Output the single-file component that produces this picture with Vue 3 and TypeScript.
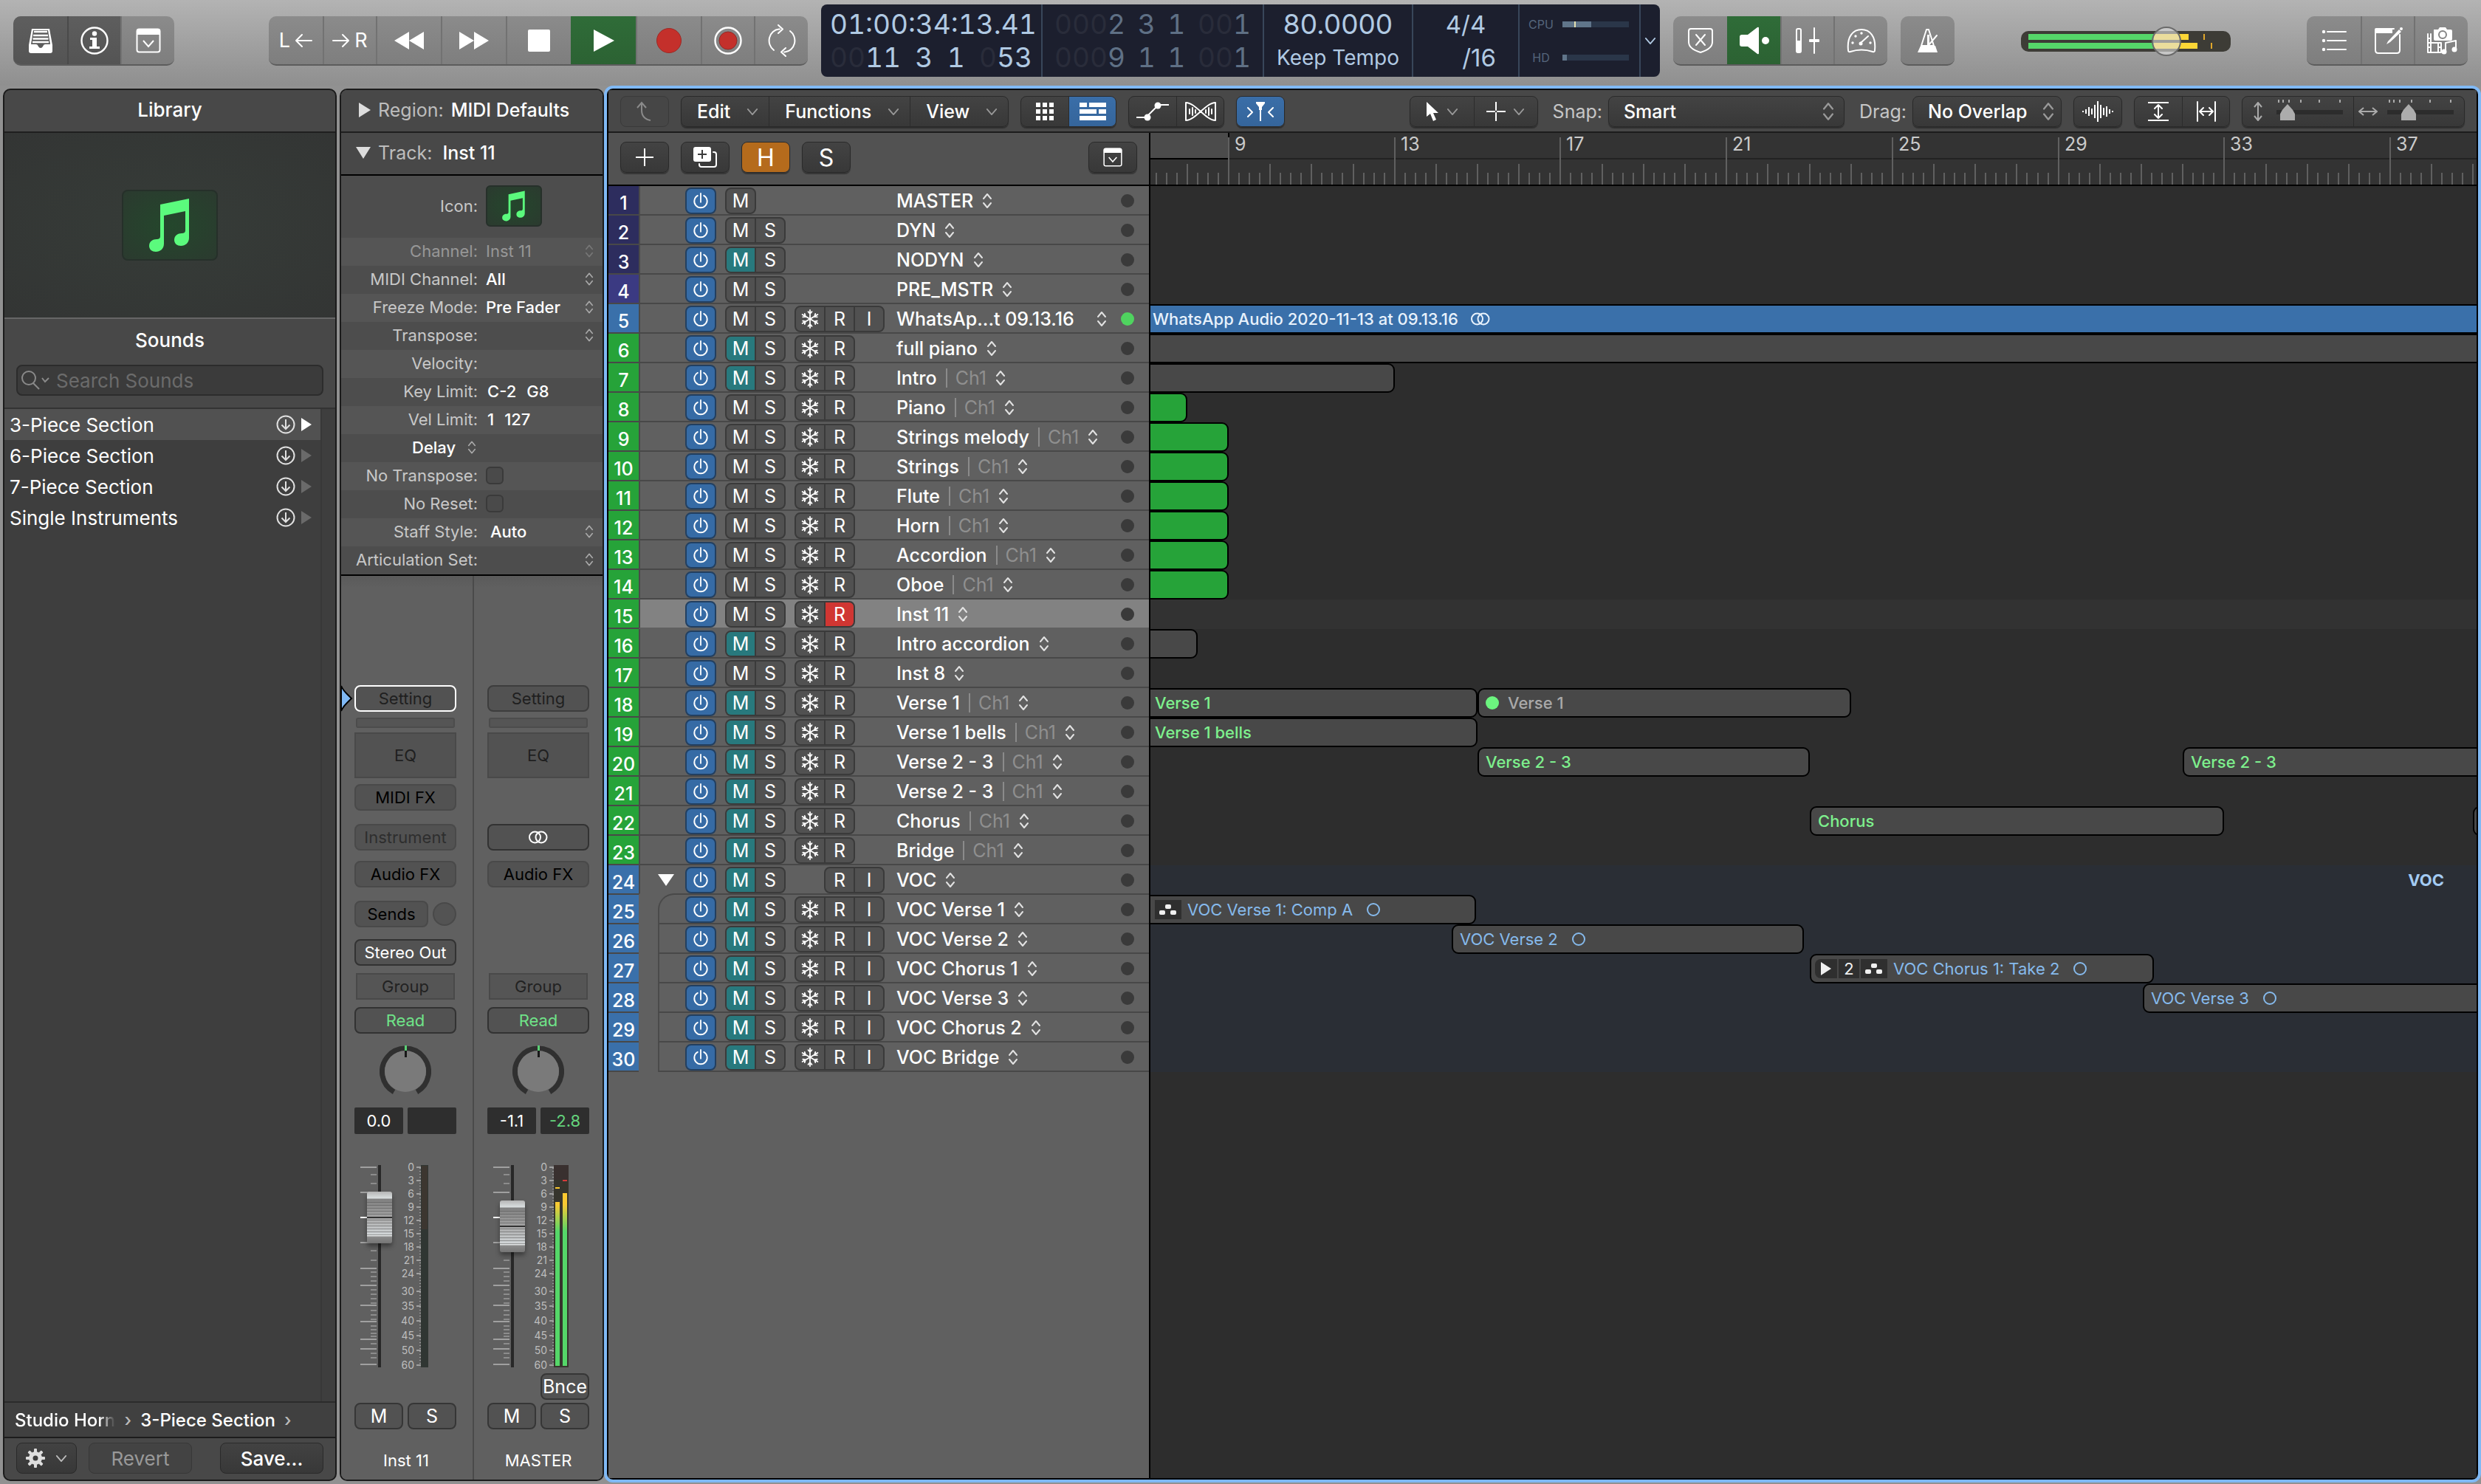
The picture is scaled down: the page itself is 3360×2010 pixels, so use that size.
<script setup lang="ts">
import { ref } from 'vue'

interface Track {
  no: number
  name: string
  color: 'navy' | 'indigo' | 'blue' | 'green'
  muted?: boolean
  solo?: boolean
  freeze?: boolean
  rec?: boolean
  input?: boolean
  channel?: boolean
  armed?: boolean
  selected?: boolean
  active?: boolean
  folder?: boolean
  child?: boolean
}

interface Region {
  row: number
  from: number
  to: number
  kind?: 'green' | 'blue'
  label?: string
  tone?: 'lime' | 'sky' | 'dim' | 'white'
  badge?: 'stereo' | 'mono'
  dot?: boolean
  take?: 'comp' | 'folder'
}

const midi = (no: number, name: string, extra: Partial<Track> = {}): Track => ({
  no, name, color: 'green', solo: true, freeze: true, rec: true, ...extra,
})
const voc = (no: number, name: string): Track => ({
  no, name, color: 'blue', muted: true, solo: true, freeze: true, rec: true, input: true, child: true,
})

const tracks: Track[] = [
  { no: 1, name: 'MASTER', color: 'navy' },
  { no: 2, name: 'DYN', color: 'navy', solo: true },
  { no: 3, name: 'NODYN', color: 'navy', solo: true, muted: true },
  { no: 4, name: 'PRE_MSTR', color: 'indigo', solo: true },
  { no: 5, name: 'WhatsAp...t 09.13.16', color: 'blue', solo: true, freeze: true, rec: true, input: true, active: true },
  midi(6, 'full piano', { muted: true }),
  midi(7, 'Intro', { muted: true, channel: true }),
  midi(8, 'Piano', { channel: true }),
  midi(9, 'Strings melody', { channel: true }),
  midi(10, 'Strings', { channel: true }),
  midi(11, 'Flute', { channel: true }),
  midi(12, 'Horn', { channel: true }),
  midi(13, 'Accordion', { channel: true }),
  midi(14, 'Oboe', { channel: true }),
  midi(15, 'Inst 11', { armed: true, selected: true }),
  midi(16, 'Intro accordion', { muted: true }),
  midi(17, 'Inst 8'),
  midi(18, 'Verse 1', { muted: true, channel: true }),
  midi(19, 'Verse 1 bells', { muted: true, channel: true }),
  midi(20, 'Verse 2 - 3', { muted: true, channel: true }),
  midi(21, 'Verse 2 - 3', { muted: true, channel: true }),
  midi(22, 'Chorus', { muted: true, channel: true }),
  midi(23, 'Bridge', { muted: true, channel: true }),
  { no: 24, name: 'VOC', color: 'blue', muted: true, solo: true, rec: true, input: true, folder: true },
  voc(25, 'VOC Verse 1'),
  voc(26, 'VOC Verse 2'),
  voc(27, 'VOC Chorus 1'),
  voc(28, 'VOC Verse 3'),
  voc(29, 'VOC Chorus 2'),
  voc(30, 'VOC Bridge'),
]

const regions: Region[] = [
  { row: 5, from: 6.5, to: 60, kind: 'blue', label: 'WhatsApp Audio 2020-11-13 at 09.13.16', tone: 'white', badge: 'stereo' },
  { row: 6, from: 6.5, to: 60 },
  { row: 7, from: 6.5, to: 13 },
  { row: 8, from: 6.5, to: 8, kind: 'green' },
  ...[9, 10, 11, 12, 13, 14].map((row): Region => ({ row, from: 6.5, to: 9, kind: 'green' })),
  { row: 16, from: 6.5, to: 8.25 },
  { row: 18, from: 6.5, to: 15, label: 'Verse 1', tone: 'lime' },
  { row: 18, from: 15, to: 24, label: 'Verse 1', tone: 'dim', dot: true },
  { row: 19, from: 6.5, to: 15, label: 'Verse 1 bells', tone: 'lime' },
  { row: 20, from: 15, to: 23, label: 'Verse 2 - 3', tone: 'lime' },
  { row: 20, from: 32, to: 60, label: 'Verse 2 - 3', tone: 'lime' },
  { row: 22, from: 23, to: 33, label: 'Chorus', tone: 'lime' },
  { row: 22, from: 39, to: 60 },
  { row: 25, from: 6.5, to: 14.97, label: 'VOC Verse 1: Comp A', tone: 'sky', badge: 'mono', take: 'comp' },
  { row: 26, from: 14.38, to: 22.86, label: 'VOC Verse 2', tone: 'sky', badge: 'mono' },
  { row: 27, from: 23, to: 31.3, label: 'VOC Chorus 1: Take 2', tone: 'sky', badge: 'mono', take: 'folder' },
  { row: 28, from: 31.03, to: 60, label: 'VOC Verse 3', tone: 'sky', badge: 'mono' },
]

const BEAT = 14.045
const ORIGIN = 106
const barX = (bar: number): number => Math.round(ORIGIN + (bar - 9) * BEAT * 4)
const regionStyle = (r: Region) => ({ left: `${barX(r.from)}px`, width: `${barX(r.to) - barX(r.from)}px` })

const ticks = Array.from({ length: 53 * 4 }, (_, i) => {
  const bar = 7 + i / 4
  const top = i % 4 ? 54 : (bar - 1) % 4 ? 42 : 6
  return { x: barX(bar), top }
})
const barLabels = Array.from({ length: 8 }, (_, i) => 9 + i * 4)

const sounds = ['3-Piece Section', '6-Piece Section', '7-Piece Section', 'Single Instruments']
const search = ref('')

const majorTicks = [3, 37, 105, 140, 163, 190, 212, 236, 249, 270]
const minorTicks = [13, 25, 116, 129, 145, 151, 157, 169, 175, 181, 187, 197, 203, 209, 218, 223, 228, 232, 242, 255, 261]
const dbScale = [
  [0, 3], [3, 21], [6, 39], [9, 57], [12, 75], [15, 93], [18, 111], [21, 129],
  [24, 147], [30, 171], [35, 191], [40, 211], [45, 231], [50, 251], [60, 271],
]
const strips = [
  { name: 'Inst 11', inst: true, vol: '0.0', peak: '', fader: 168 },
  { name: 'MASTER', inst: false, vol: '-1.1', peak: '-2.8', fader: 156 },
]
</script>

<template>
  <div class="app">
    <svg class="defs" aria-hidden="true">
      <symbol id="updown" viewBox="0 0 14 22"><path d="M2 8 7 2l5 6M2 14l5 6 5-6" fill="none" stroke="currentColor" stroke-width="2" stroke-linecap="round" stroke-linejoin="round" /></symbol>
      <symbol id="down" viewBox="0 0 18 12"><path d="M2 2l7 8 7-8" fill="none" stroke="currentColor" stroke-width="2" stroke-linecap="round" stroke-linejoin="round" /></symbol>
      <symbol id="power" viewBox="0 0 24 24"><path d="M12 1v13M7.500 4.200A9.500 9.500 0 1 0 16.500 4.200" fill="none" stroke="currentColor" stroke-width="2" stroke-linecap="round" /></symbol>
      <symbol id="flake" viewBox="0 0 26 26">
        <g fill="none" stroke="currentColor" stroke-width="1.800" stroke-linecap="round">
          <g v-for="a in [0, 60, 120, 180, 240, 300]" :key="a" :transform="`rotate(${a} 13 13)`"><path d="M13 13V1M10.500 3.200 13 6l2.500-2.800" /></g>
        </g>
      </symbol>
      <symbol id="note" viewBox="0 0 60 74"><path d="M17 9 56 1v53c0 7-5 11-11 11-5 0-9-3-9-8 0-6 5-9 10-9 3 0 5-1 5-4V18L22 24v38c0 7-5 11-11 11-5 0-9-3-9-8 0-6 5-9 10-9 3 0 5-1 5-4z" fill="#5bfa7d" /></symbol>
      <symbol id="window" viewBox="0 0 34 34"><rect x="1.500" y="1.500" width="31" height="31" rx="3" fill="none" stroke="currentColor" stroke-width="2" /><path d="M1 9V4q0-3 3-3h26q3 0 3 3v5z" fill="currentColor" /><path d="M10 17l7 8 7-8" fill="none" stroke="currentColor" stroke-width="2" /></symbol>
      <symbol id="stereo" viewBox="0 0 28 18"><g fill="none" stroke="currentColor" stroke-width="2"><circle cx="9.500" cy="9" r="7.500" /><circle cx="18" cy="9" r="7.500" /></g></symbol>
      <symbol id="mono" viewBox="0 0 20 20"><circle cx="10" cy="10" r="8" fill="none" stroke="currentColor" stroke-width="2" /></symbol>
      <symbol id="comp" viewBox="0 0 24 16"><g fill="currentColor"><rect x="8" y="1" width="8" height="6" rx="2" /><rect x="0" y="9" width="8" height="6" rx="2" /><rect x="15" y="9" width="8" height="6" rx="2" /></g></symbol>
    </svg>

    <header class="control-bar">
      <div class="group">
        <button class="dark" aria-label="Library"><svg width="36" height="36" viewBox="0 0 36 36"><path d="M6 2h24l4 22v8q0 3-3 3H5q-3 0-3-3v-8z" fill="#fff" /><path d="M8 4h20l3 19h-7q-2 0-3 3-1 2-3 2t-3-2q-1-3-3-3H5z" fill="#5b5b5b" /><path d="M9 6h18M8 11h20M7.500 15.500h21M7 20h22" stroke="#fff" stroke-width="2.400" /></svg></button>
        <button class="dark" aria-label="Inspector"><svg width="40" height="40" viewBox="0 0 40 40"><circle cx="20" cy="20" r="17.500" fill="none" stroke="#fff" stroke-width="2.400" /><circle cx="20" cy="10.500" r="3.200" fill="#fff" /><path d="M14 16h9v12h4v3H13v-3h4v-9h-3z" fill="#fff" /></svg></button>
        <button aria-label="Toolbar"><svg width="34" height="34"><use href="#window" /></svg></button>
      </div>

      <div class="group transport">
        <button class="lr" aria-label="Go to left locator">L<svg width="24" height="20" viewBox="0 0 24 20"><path d="M23 10H2M10 2l-8 8 8 8" class="line" /></svg></button>
        <button class="lr" aria-label="Go to right locator"><svg width="24" height="20" viewBox="0 0 24 20"><path d="M1 10h21M14 2l8 8-8 8" class="line" /></svg>R</button>
        <button class="wide" aria-label="Rewind"><svg width="40" height="24" viewBox="0 0 40 24"><path d="M20 0v24L0 12zM40 0v24L20 12z" fill="#fff" /></svg></button>
        <button class="wide" aria-label="Forward"><svg width="40" height="24" viewBox="0 0 40 24"><path d="M0 0v24l20-12zM20 0v24l20-12z" fill="#fff" /></svg></button>
        <button class="wide" aria-label="Stop"><svg width="30" height="30"><rect width="30" height="30" rx="2" fill="#fff" /></svg></button>
        <button class="wide play" aria-label="Play"><svg width="30" height="32" viewBox="0 0 30 32"><path d="M1 1v30l28-15z" fill="#fff" /></svg></button>
        <button class="wide" aria-label="Record"><svg width="36" height="36"><circle cx="18" cy="18" r="16.500" fill="#c4302b" stroke="#9c2a26" /></svg></button>
        <button aria-label="Capture recording"><svg width="40" height="40"><circle cx="20" cy="20" r="17.500" fill="none" stroke="#fff" stroke-width="2.400" /><circle cx="20" cy="20" r="12" fill="#c4302b" stroke="#8e2b28" /></svg></button>
        <button aria-label="Cycle"><svg width="44" height="44" viewBox="0 0 44 44"><path d="M19 6.500H18A14 15.500 0 0 0 11 35M17 1l6 5.500-6 5.500M25 37.500h1A14 15.500 0 0 0 33 9M27 32l-6 5.500 6 5.500" class="line" /></svg></button>
      </div>

      <div class="lcd">
        <div class="cell pos">
          <div class="digits"><span>01:00:34:13.41</span></div>
          <div class="digits"><span><i>00</i>11</span><span>3</span><span>1</span><span><i>0</i>53</span></div>
        </div>
        <div class="cell loc">
          <div class="digits"><span><i>000</i>2</span><span>3</span><span>1</span><span><i>00</i>1</span></div>
          <div class="digits"><span><i>000</i>9</span><span>1</span><span>1</span><span><i>00</i>1</span></div>
        </div>
        <div class="cell tempo"><div>80.0000</div><div class="keep">Keep Tempo</div></div>
        <div class="cell sig"><div>4/4</div><div class="div">/16</div></div>
        <div class="cell load">
          <div><span>CPU</span><b class="cpu"></b></div>
          <div><span>HD</span><b class="hd"></b></div>
        </div>
        <button class="cell more" aria-label="Display mode"><svg width="16" height="11"><use href="#down" /></svg></button>
      </div>

      <div class="group">
        <button aria-label="Replace"><svg width="36" height="36" viewBox="0 0 36 36"><path d="M2 5q0-3 3-3h26q3 0 3 3v15q0 9-16 14Q2 29 2 20zM12 10l12 14M24 10 12 24" class="line" /></svg></button>
        <button class="play" aria-label="Low latency"><svg width="42" height="38" viewBox="0 0 42 38"><path d="M1 14q0-3 3-3h8L25 1q2-1 2 1v34q0 2-2 1L12 27H4q-3 0-3-3z" fill="#fff" /><circle cx="36" cy="19" r="5" fill="#fff" /></svg></button>
        <button aria-label="Input monitoring"><svg width="34" height="36" viewBox="0 0 34 36"><rect x="2" y="2" width="6" height="32" rx="2" class="line" /><path d="M2 18h6v16H2z" fill="#fff" /><path d="M26 1v34" class="line" /><rect x="19" y="16" width="14" height="4" rx="1" fill="#fff" /></svg></button>
        <button aria-label="Tuner"><svg width="40" height="36" viewBox="0 0 40 36"><path d="M2 31C0 12 9 3 20 3s20 9 18 28q0 3-3 2-15-5-30 0-3 1-3-2zM19 21 29 12" class="line" /><g fill="#fff"><circle cx="19" cy="22" r="2.500" /><circle cx="8" cy="21" r="1.700" /><circle cx="12" cy="12" r="1.700" /><circle cx="20" cy="8" r="1.700" /><circle cx="32" cy="21" r="1.700" /></g></svg></button>
      </div>
      <div class="group single">
        <button aria-label="Metronome"><svg width="32" height="36" viewBox="0 0 32 36"><path d="M14 3h3l7 22H7zM17 24l11-13" class="line" /><path d="M6 25h20l3 9H2zM15 10h3v14h-3z" fill="#fff" /></svg></button>
      </div>

      <div class="master">
        <svg width="284" height="28" viewBox="0 0 284 28" aria-hidden="true">
          <rect width="284" height="28" rx="10" fill="#3d3c36" />
          <path d="M10 4h170v8H10zM10 16h170v8H10z" fill="#55d769" />
          <path d="M180 4h47v8h-47zM180 16h59v8h-59z" fill="#fbd636" />
          <path d="M247 4h2v8h-2zM257 16h2v8h-2z" fill="#e0a72b" />
        </svg>
        <input type="range" min="0" max="244" value="177" aria-label="Master volume" />
      </div>

      <div class="group right">
        <button aria-label="List editors"><svg width="34" height="32" viewBox="0 0 34 32"><path d="M8 4h25M8 16h25M8 28h25" class="line" /><g fill="#fff"><circle cx="3" cy="4" r="2.200" /><circle cx="3" cy="16" r="2.200" /><circle cx="3" cy="28" r="2.200" /></g></svg></button>
        <button aria-label="Note pads"><svg width="40" height="38" viewBox="0 0 40 38"><path d="M2 4q0-2 2-2h22v7H2z" fill="#fff" /><path d="M28 3H6Q3 3 3 6v26q0 4 4 4h25q4 0 4-4V11" class="line" /><path d="M20 20 35 4l3 3-15 14-5 3z" fill="#fff" /><circle cx="38" cy="3" r="2" fill="#fff" /></svg></button>
        <button aria-label="Browsers"><svg width="42" height="38" viewBox="0 0 42 38"><path d="M10 4h6l2-3h8l2 3h5q2 0 2 2v11q0 2-2 2H12q-2 0-2-2z" fill="#fff" /><circle cx="22" cy="11" r="5" fill="none" stroke="#858585" stroke-width="2" /><path d="M2 10v25h18V22M6 10v25M16 22v13M2 16h4M2 22h18M2 28h4M16 28h4M26 34V22l14-3v12" class="line" /><circle cx="24" cy="34" r="3.500" fill="#fff" /><circle cx="38" cy="31" r="3.500" fill="#fff" /></svg></button>
      </div>
    </header>

    <main class="workspace">
      <section class="panel library">
        <h2>Library</h2>
        <div class="art"><div class="tile"><svg width="60" height="74"><use href="#note" /></svg></div></div>
        <h2 class="sounds-title">Sounds</h2>
        <div class="search">
          <svg width="40" height="26" viewBox="0 0 40 26"><g fill="none" stroke="#8a8a8a" stroke-width="2"><circle cx="11" cy="10" r="9" /><path d="M17 17l8 8M29 10l4 5 5-5" /></g></svg>
          <input v-model="search" type="text" placeholder="Search Sounds" aria-label="Search Sounds" />
        </div>
        <div class="browser">
          <ul>
            <li v-for="(s, i) in sounds" :key="s" :class="{ on: i === 0 }">
              <span>{{ s }}</span>
              <svg width="26" height="26" viewBox="0 0 26 26"><g fill="none" stroke="#e0e0e0" stroke-width="2"><circle cx="13" cy="13" r="11.500" /><path d="M13 6v13M7.500 13.500 13 19l5.500-5.500" /></g></svg>
              <svg class="tri" width="14" height="18" viewBox="0 0 14 18"><path d="M0 0v18l14-9z" fill="currentColor" /></svg>
            </li>
          </ul>
        </div>
        <nav class="crumbs"><a href="#horns" class="fade">Studio Horn</a><em>›</em><a href="#section">3-Piece Section</a><em>›</em></nav>
        <footer>
          <button class="btn gear" aria-label="Action menu"><svg width="26" height="26" viewBox="0 0 26 26"><g fill="#ddd"><rect v-for="a in [0, 45, 90, 135]" :key="a" x="11" y="0" width="4" height="26" rx="1" :transform="`rotate(${a} 13 13)`" /></g><circle cx="13" cy="13" r="6.500" fill="none" stroke="#ddd" stroke-width="5" /><circle cx="13" cy="13" r="3.500" fill="#3b3b3b" /></svg><svg width="16" height="11"><use href="#down" /></svg></button>
          <button class="btn revert" disabled>Revert</button>
          <button class="btn save">Save...</button>
        </footer>
      </section>

      <section class="panel inspector">
        <div class="head"><svg width="16" height="20" viewBox="0 0 16 20"><path d="M0 0v20l16-10z" fill="#ddd" /></svg><span>Region:</span><b>MIDI Defaults</b></div>
        <div class="head track"><svg width="20" height="16" viewBox="0 0 20 16"><path d="M0 0h20L10 16z" fill="#ddd" /></svg><span>Track:</span><b>Inst 11</b></div>
        <div class="params">
          <div class="icon-row"><span>Icon:</span><div class="tile"><svg width="34" height="42"><use href="#note" /></svg></div></div>
          <div class="off"><label for="p-ch">Channel:</label><select id="p-ch" disabled><option>Inst 11</option></select><svg class="ud"><use href="#updown" /></svg></div>
          <div><label for="p-midi">MIDI Channel:</label><select id="p-midi"><option>All</option></select><svg class="ud"><use href="#updown" /></svg></div>
          <div><label for="p-frz">Freeze Mode:</label><select id="p-frz"><option>Pre Fader</option></select><svg class="ud"><use href="#updown" /></svg></div>
          <div><label for="p-trs">Transpose:</label><select id="p-trs"><option></option></select><svg class="ud"><use href="#updown" /></svg></div>
          <div><span>Velocity:</span></div>
          <div><span>Key Limit:</span><p><b>C-2</b><b>G8</b></p></div>
          <div><span>Vel Limit:</span><p><b>1</b><b>127</b></p></div>
          <div class="delay"><button>Delay <svg class="ud"><use href="#updown" /></svg></button></div>
          <div><label for="p-nt">No Transpose:</label><input id="p-nt" type="checkbox" /></div>
          <div><label for="p-nr">No Reset:</label><input id="p-nr" type="checkbox" /></div>
          <div><label for="p-st">Staff Style:</label><select id="p-st" class="indent"><option>Auto</option></select><svg class="ud"><use href="#updown" /></svg></div>
          <div><label for="p-as">Articulation Set:</label><select id="p-as"><option></option></select><svg class="ud"><use href="#updown" /></svg></div>
        </div>
        <div class="strips">
          <svg class="pointer" width="16" height="36" viewBox="0 0 16 36"><path d="M0 1q2 5 8 11l6 6-6 6q-6 6-8 11z" fill="#80b9f5" stroke="#000" stroke-width="2" /></svg>
          <div v-for="s in strips" :key="s.name" class="strip">
            <button class="slot ghost" :class="{ focus: s.inst }">Setting</button>
            <div class="gain"></div>
            <button class="slot eq">EQ</button>
            <button v-if="s.inst" class="slot midi-fx">MIDI FX</button>
            <div v-else class="gap-fx"></div>
            <button v-if="s.inst" class="slot ghost instr">Instrument</button>
            <button v-else class="slot instr lit" aria-label="Stereo format"><svg width="28" height="18"><use href="#stereo" /></svg></button>
            <button class="slot afx">Audio FX</button>
            <template v-if="s.inst">
              <div class="sends"><button class="slot">Sends</button><i></i></div>
              <button class="slot out lit">Stereo Out</button>
            </template>
            <div v-else class="gap-out"></div>
            <button class="slot group-slot">Group</button>
            <button class="slot read">Read</button>
            <svg class="knob" width="70" height="70" viewBox="0 0 70 70">
              <path d="M19.500 63A31.500 31.500 0 1 1 50.500 63" fill="none" stroke="#303030" stroke-width="7" />
              <circle cx="35" cy="35" r="28" fill="#7a7a7a" />
              <path d="M34 0h3v7h-3z" fill="#5bd075" /><path d="M34 7h3v9h-3z" fill="#181818" />
            </svg>
            <div class="pair vals"><span>{{ s.vol }}</span><span class="peak">{{ s.peak }}</span></div>
            <div class="fader">
              <svg width="138" height="294" viewBox="0 -10 138 294">
                <defs>
                  <linearGradient id="lvl" x1="0" y1="38" x2="0" y2="90" gradientUnits="userSpaceOnUse"><stop offset="0" stop-color="#fdc92f" /><stop offset=".3" stop-color="#f8c933" /><stop offset="1" stop-color="#55d769" /></linearGradient>
                </defs>
                <g fill="#a0a0a0">
                  <rect v-for="y in majorTicks" :key="y" x="8" :y="y - 1" width="22" height="2" />
                  <rect v-for="y in minorTicks" :key="y" x="22" :y="y - 1" width="8" height="2" opacity=".7" />
                </g>
                <rect x="8" y="70" width="22" height="2" fill="#fff" />
                <rect x="32" y="0" width="4" height="274" fill="#282828" />
                <path d="M89 4V271" stroke="#a0a0a0" stroke-width="2" stroke-dasharray="1 3" />
                <g v-for="[v, y] in dbScale" :key="v"><text x="81" :y="y + 5" text-anchor="end">{{ v }}</text><rect x="84" :y="y - 1" width="6" height="2" fill="#a0a0a0" /></g>
                <template v-if="s.inst">
                  <rect x="90" y="0" width="10" height="274" fill="#303633" /><rect x="91" y="1" width="8" height="86" fill="#3c3630" />
                </template>
                <template v-else>
                  <rect x="90" y="0" width="20" height="274" fill="#39302f" /><path d="M90 20h20v254H90z" fill="#36352d" />
                  <rect x="92" y="50" width="6" height="222" fill="url(#lvl)" /><rect x="102" y="38" width="6" height="234" fill="url(#lvl)" />
                  <rect x="92" y="30" width="6" height="2" fill="#fbc92f" /><rect x="102" y="20" width="6" height="2" fill="#d63b3b" />
                </template>
              </svg>
              <input type="range" min="0" max="204" :value="s.fader" :aria-label="`${s.name} volume`" />
            </div>
            <div class="pair bounce"><i></i><button v-if="!s.inst" class="slot">Bnce</button></div>
            <div class="pair ms"><button class="slot">M</button><button class="slot">S</button></div>
            <div class="strip-name">{{ s.name }}</div>
          </div>
        </div>
      </section>

      <section class="tracks-area">
        <div class="toolbar">
          <div class="seg faint"><button aria-label="Up"><svg width="24" height="28" viewBox="0 0 24 28" class="up"><path d="M20 26q-12-2-12-14V2M2 9l6-7 6 7" /></svg></button></div>
          <div class="seg menus">
            <button>Edit <svg width="16" height="11"><use href="#down" /></svg></button>
            <button>Functions <svg width="16" height="11"><use href="#down" /></svg></button>
            <button>View <svg width="16" height="11"><use href="#down" /></svg></button>
          </div>
          <div class="seg">
            <button aria-label="Live loops grid"><svg width="24" height="24" viewBox="0 0 24 24" fill="#fff"><path d="M0 0h6v6H0zM9 0h6v6H9zM18 0h6v6h-6zM0 9h6v6H0zM9 9h6v6H9zM18 9h6v6h-6zM0 18h6v6H0zM9 18h6v6H9zM18 18h6v6h-6z" /></svg></button>
            <button class="on" aria-label="Tracks view"><svg width="36" height="24" viewBox="0 0 36 24" fill="#fff"><path d="M0 0h10v6H0zM13 0h23v6H13zM0 9h23v6H0zM26 9h10v6H26zM0 18h36v6H0z" /></svg></button>
          </div>
          <div class="seg">
            <button aria-label="Automation"><svg width="44" height="26" viewBox="0 0 44 26"><path d="M0 21h12M14 20 28 6M32 4h12" class="line" /><circle cx="15" cy="21" r="4.500" fill="#fff" /><circle cx="29" cy="5" r="4.500" fill="#fff" /></svg></button>
            <button aria-label="Flex"><svg width="42" height="26" viewBox="0 0 42 26"><path d="M1 1v24C14 25 28 1 41 1v24C28 25 14 1 1 1z" class="line" /><path d="M6 10v6M10 8v10M14 11v4M28 11v4M32 8v10M36 10v6" class="line" /></svg></button>
          </div>
          <div class="seg"><button class="on" aria-label="Catch playhead"><svg width="38" height="26" viewBox="0 0 38 26"><path d="M2 8l6 6-6 6M36 8l-6 6 6 6M19 4v22" class="line" /><path d="M13 0h12v2l-4 5v4h-4V7l-4-5z" fill="#fff" /></svg></button></div>

          <div class="seg tools">
            <button aria-label="Pointer tool"><svg width="18" height="26" viewBox="0 0 18 26"><path d="M1 0v20l5-4 4 10 4-2-4-9h7z" fill="#fff" /></svg><svg width="16" height="11"><use href="#down" /></svg></button>
            <button aria-label="Marquee tool"><svg width="26" height="26" viewBox="0 0 26 26"><path d="M13 0v11M13 15v11M0 13h11M15 13h11" class="line" /></svg><svg width="16" height="11"><use href="#down" /></svg></button>
          </div>
          <label class="cap" for="snap">Snap:</label>
          <div class="pop snap"><select id="snap"><option>Smart</option></select><svg width="18" height="26" viewBox="0 0 14 22"><use href="#updown" /></svg></div>
          <label class="cap" for="drag">Drag:</label>
          <div class="pop drag"><select id="drag"><option>No Overlap</option></select><svg width="18" height="26" viewBox="0 0 14 22"><use href="#updown" /></svg></div>
          <div class="seg tail"><button aria-label="Waveform zoom"><svg width="42" height="28" viewBox="0 0 42 28"><path d="M1 13v2M5 11v6M9 8v12M13 10v8M17 5v18M21 0v28M25 5v18M29 9v10M33 7v14M37 11v6M41 13v2" stroke="#fff" stroke-width="2" /></svg></button></div>
          <div class="seg tail"><button aria-label="Zoom vertically to fit"><svg width="28" height="28" viewBox="0 0 28 28"><path d="M0 2h28M0 26h28M14 5v18M9 10l5-5 5 5M9 18l5 5 5-5" class="line" /></svg></button><button aria-label="Zoom horizontally to fit"><svg width="28" height="28" viewBox="0 0 28 28"><path d="M2 1v26M26 1v26M5 14h18M10 9l-5 5 5 5M18 9l5 5-5 5" class="line" /></svg></button></div>
          <div class="seg tail zooms">
            <div class="z"><svg width="14" height="26" viewBox="0 0 14 26"><path d="M7 1v24M2 7l5-6 5 6M2 19l5 6 5-6" /></svg><div class="zs"><svg width="90" height="4" viewBox="0 0 90 4"><path d="M3 0v4M9 0v4M17 0v4M33 0v4M58 0v4M86 0v4" /></svg><input type="range" min="0" max="70" value="5" aria-label="Vertical zoom" /></div></div>
            <div class="z"><svg width="26" height="14" viewBox="0 0 26 14"><path d="M1 7h24M7 2 1 7l6 5M19 2l6 5-6 5" /></svg><div class="zs"><svg width="90" height="4" viewBox="0 0 90 4"><path d="M3 0v4M9 0v4M17 0v4M33 0v4M58 0v4M86 0v4" /></svg><input type="range" min="0" max="70" value="19" aria-label="Horizontal zoom" /></div></div>
          </div>
        </div>

        <div class="arrange">
          <div class="headers">
            <div class="subbar">
              <div class="seg"><button aria-label="New track"><svg width="24" height="24" viewBox="0 0 24 24"><path d="M12 0v24M0 12h24" class="line" /></svg></button></div>
              <div class="seg"><button aria-label="Duplicate track"><svg width="32" height="28" viewBox="0 0 32 28"><rect width="24" height="20" rx="3" fill="#fff" /><path d="M12 4v12M6 10h12" stroke="#3b3b3b" stroke-width="2" /><path d="M27 7h1q3 0 3 3v14q0 3-3 3H11q-3 0-3-3v-1" class="line" /></svg></button></div>
              <div class="seg"><button class="hide">H</button></div>
              <div class="seg"><button>S</button></div>
              <div class="seg config"><button aria-label="Track header configuration"><svg width="26" height="26"><use href="#window" /></svg></button></div>
            </div>
            <ol class="track-list">
              <li v-for="t in tracks" :key="t.no" :class="{ selected: t.selected, child: t.child, first: t.no === 25, folder: t.folder }">
                <span class="num" :class="t.color">{{ t.no }}</span>
                <div class="row">
                  <svg v-if="t.folder" class="fold" width="22" height="16" viewBox="0 0 22 16"><path d="M0 0h22L11 16z" fill="#fff" /></svg>
                  <button class="tb power" aria-label="Track on"><svg width="22" height="22"><use href="#power" /></svg></button>
                  <div class="btns first-btns"><button :class="{ mute: t.muted }">M</button><button v-if="t.solo">S</button></div>
                  <div v-if="t.rec" class="btns" :class="{ 'no-freeze': !t.freeze }">
                    <button v-if="t.freeze" aria-label="Freeze"><svg width="26" height="26"><use href="#flake" /></svg></button>
                    <button :class="{ armed: t.armed }">R</button>
                    <button v-if="t.input">I</button>
                  </div>
                  <div class="name" :class="{ long: t.no === 5 }">
                    <span>{{ t.name }}</span><span v-if="t.channel" class="ch">Ch1</span>
                    <svg width="14" height="22"><use href="#updown" /></svg>
                  </div>
                  <i class="led" :class="{ live: t.active }"></i>
                </div>
              </li>
            </ol>
          </div>

          <div class="timeline">
            <div class="ruler">
              <div class="cycle"></div>
              <svg aria-hidden="true"><path v-for="t in ticks" :key="t.x" :d="`M${t.x} ${t.top}V70`" /></svg>
              <span v-for="b in barLabels" :key="b" :style="{ left: `${barX(b) + 8}px` }">{{ b }}</span>
            </div>
            <div class="lanes">
              <div v-for="t in tracks" :key="t.no" class="lane" :class="{ selected: t.selected, voc: t.child || t.folder }">
                <strong v-if="t.folder">VOC</strong>
                <div v-for="r in regions.filter(x => x.row === t.no)" :key="r.from" class="region" :class="[r.kind, r.tone, { early: r.from < 7 }]" :style="regionStyle(r)">
                  <i v-if="r.dot" class="green-dot"></i>
                  <span v-if="r.take === 'folder'" class="chip"><svg width="14" height="18" viewBox="0 0 14 18"><path d="M0 0v18l14-9z" fill="currentColor" /></svg></span>
                  <span v-if="r.take === 'folder'" class="chip">2</span>
                  <span v-if="r.take" class="chip last"><svg width="24" height="16"><use href="#comp" /></svg></span>
                  <span v-if="r.label">{{ r.label }}</span>
                  <svg v-if="r.badge === 'stereo'" width="28" height="18"><use href="#stereo" /></svg>
                  <svg v-if="r.badge === 'mono'" class="mono" width="20" height="20"><use href="#mono" /></svg>
                </div>
              </div>
            </div>
          </div>
        </div>
      </section>
    </main>
  </div>
</template>

<style>
html, body { margin: 0; background: #919191; }
</style>

<style scoped>
* { box-sizing: border-box; }
.app { display: flex; flex-direction: column; min-height: 100vh; font-family: Inter, "Liberation Sans", sans-serif; font-size: 24px; color: #fff; background: #919191; }
.defs { position: absolute; width: 0; height: 0; }
button, input, select { font: inherit; color: inherit; margin: 0; padding: 0; border: 0; background: none; outline: 0; }
button { display: flex; align-items: center; justify-content: center; white-space: nowrap; }
svg { flex: none; display: block; }
.line { fill: none; stroke: #fff; stroke-width: 2; stroke-linecap: round; stroke-linejoin: round; }
h2 { margin: 0; font-size: 26px; font-weight: 500; text-align: center; }
ul, ol { margin: 0; padding: 0; list-style: none; }
a { color: inherit; text-decoration: none; }
select { appearance: none; }

/* control bar */
.control-bar { display: flex; align-items: flex-start; height: 116px; flex: none; padding: 22px 18px 0; background: linear-gradient(#b3b3b3, #8f8f8f); }
.group { display: flex; height: 67px; border-radius: 10px; overflow: hidden; background: linear-gradient(#8b8b8b, #7e7e7e); border-bottom: 2px solid #5c5c5c; }
.group button { width: 72px; border-left: 2px solid #727272; }
.group button:first-child { border-left: 0; width: 73px; }
.group button:last-child { width: 73px; }
.group .dark { background: linear-gradient(#5e5e5e, #545454); border-color: #4a4a4a; }
.group .wide { width: 88px; }
.group .play { background: linear-gradient(#2f6c38, #2c6233); border-color: transparent; }
.transport { margin-left: 128px; margin-right: 18px; }
.lr { font-size: 27px; gap: 6px; }
.single { margin-left: 18px; }
.right { margin-left: auto; }
.lcd { display: flex; width: 1136px; height: 98px; margin: -16px 18px 0 0; border-radius: 8px; background: #1c1f2e; color: #b1cae3; font-size: 37px; }
.cell { display: flex; flex-direction: column; justify-content: space-around; padding: 4px 0; border-right: 2px solid #38465a; position: relative; }
.cell > div { height: 45px; display: flex; align-items: center; justify-content: center; }
.cell i { font-style: normal; color: #292c3a; }
.cell .digits { justify-content: space-between; font-variant-numeric: tabular-nums; }
.pos { width: 300px; padding: 4px 12px; }
.loc { width: 300px; padding: 4px 16px; color: #5f7085; }
.tempo { width: 202px; }
.keep { font-size: 28px; }
.sig { width: 144px; font-size: 33px; }
.cell > .div { justify-content: flex-end; padding-right: 30px; }
.load { width: 164px; font-size: 16px; color: #55667c; }
.load > div { justify-content: flex-start; padding-left: 10px; }
.load span { width: 38px; text-align: center; margin-right: 10px; }
.load b { width: 90px; height: 8px; background: #2a3649; }
.load .cpu { background: linear-gradient(90deg, #60758a 16px, #e5e0b0 16px 18px, #60758a 18px 39px, #2a3649 39px); }
.load .hd { background: linear-gradient(90deg, #60758a 6px, #2a3649 6px); }
.more { flex: 1; border: 0; align-items: center; justify-content: center; }
.master { position: relative; margin: 20px 0 0 90px; height: 28px; }
.master input { position: absolute; inset: -6px 0; width: 284px; height: 40px; appearance: none; }
.master input::-webkit-slider-thumb { appearance: none; width: 40px; height: 40px; border-radius: 50%; border: 2px solid #6a6a6a; background: rgb(225 225 225 / 60%); }

/* panels */
.workspace { flex: 1; display: flex; align-items: stretch; padding: 0 0 2px 4px; min-height: 0; }
.panel { margin: 4px 4px 2px 0; border: 2px solid #1b1b1b; border-radius: 10px; overflow: hidden; background: #484848; display: flex; flex-direction: column; flex: none; }
.library { width: 452px; }
.library > h2 { height: 58px; line-height: 54px; border-bottom: 2px solid #1f1f1f; flex: none; }
.art { height: 252px; display: flex; align-items: center; justify-content: center; background: radial-gradient(#363c38, #333534); border-bottom: 2px solid #666; }
.art .tile { width: 130px; height: 96px; border-radius: 8px; }
.tile { display: flex; align-items: center; justify-content: center; border: 2px solid #26302a; border-radius: 6px; background: radial-gradient(#24472c, #2b3a2f); }
.library > .sounds-title { border: 0; height: 62px; line-height: 58px; }
.search { display: flex; align-items: center; height: 42px; margin: 0 16px 16px; padding-left: 4px; border: 2px solid #2c2c2c; border-radius: 8px; background: #3b3b3b; flex: none; }
.search input { flex: 1; margin-left: 8px; font-size: 26px; min-width: 0; }
.search input::placeholder { color: #6b6b6b; }
.browser { flex: 1; border-top: 2px solid #333; background: #3e3e3e; }
.browser ul { margin-right: 18px; height: 100%; border-right: 2px solid #383838; }
.browser li { display: flex; align-items: center; height: 42px; padding: 0 12px 0 7px; font-size: 26px; }
.browser li span { flex: 1; }
.browser li.on { background: #515151; }
.tri { margin-left: 8px; color: #6a6a6a; }
.on .tri { color: #fff; }
.crumbs { display: flex; align-items: center; height: 50px; padding-left: 14px; border-top: 2px solid #2b2b2b; border-bottom: 2px solid #1c1c1c; background: #404040; font-size: 24px; font-weight: 500; }
.crumbs em { font-style: normal; color: #bbb; width: 34px; text-align: center; }
.crumbs .fade { min-width: 134px; white-space: nowrap; mask-image: linear-gradient(90deg, #000 84%, transparent); }
.library footer { display: flex; height: 56px; padding: 6px 16px; }
.btn { height: 42px; border: 1px solid #2a2a2a; border-radius: 8px; background: linear-gradient(#424242, #383838); font-size: 26px; font-weight: 500; }
.gear { width: 82px; gap: 14px; color: #bbb; }
.revert { width: 140px; margin-left: 16px; background: #434343; border-color: #383838; color: #999; font-weight: 400; }
.save { width: 140px; margin-left: auto; }

/* inspector */
.inspector { width: 358px; background: #606060; }
.head { display: flex; align-items: center; height: 58px; padding: 0 0 2px 24px; border-bottom: 2px solid #1f1f1f; background: #484848; color: #bdbdbd; font-size: 25px; flex: none; }
.head b { margin-left: 10px; color: #fff; font-weight: 500; }
.head svg { margin-right: 10px; }
.head.track { padding-left: 20px; border-color: #000; }
.head.track b { margin-left: 14px; }
.params { border-bottom: 2px solid #000; background: #4e4e4e; font-size: 22px; color: #c8c8c8; }
.params > div { display: flex; align-items: center; height: 38px; padding-bottom: 2px; background: #4d4d4d; }
.params > div:nth-child(even) { background: #555; }
.params > .icon-row { height: 84px; }
.params label, .params > div > span { width: 185px; margin-right: 11px; text-align: right; flex: none; }
.icon-row .tile { width: 76px; height: 56px; }
.params select, .params p, .delay button { flex: 1; min-width: 0; color: #fff; font-weight: 500; opacity: 1; }
.params .indent { padding-left: 6px; }
.params p { display: flex; gap: 14px; margin: 0 0 0 2px; }
.params b { font-weight: 500; }
.params .off, .params .off select { color: #979797; font-weight: 400; }
.ud { width: 12px; height: 20px; margin-right: 12px; color: #a8a8a8; }
.off .ud { color: #777; }
.params .delay { padding-left: 96px; }
.delay button { flex: none; gap: 16px; }
.params input { appearance: none; width: 24px; height: 24px; border: 2px solid #3a3a3a; border-radius: 6px; background: #4a4a4a; }
.strips { flex: 1; position: relative; display: flex; background: linear-gradient(#5a5a5a, #606060 16px); }
.pointer { position: absolute; left: 0; top: 148px; }
.strip { width: 180px; padding: 148px 20px 0 18px; border-right: 2px solid #4a4a4a; font-size: 22px; display: flex; flex-direction: column; }
.strip:last-child { border: 0; width: 174px; padding-right: 18px; }
.slot { width: 138px; height: 36px; flex: none; border: 2px solid #494949; border-radius: 8px; background: #525252; color: #000; }
.ghost { color: #1f1f1f; border-color: #3d3d3d; }
.instr.ghost { color: #2e2e2e; border-color: #494949; }
.focus { border-color: #fff; }
.lit { color: #fff; border-color: #323232; }
.gain { height: 14px; margin: 8px 2px 6px; border: 2px solid #4c4c4c; border-radius: 3px; background: #555; flex: none; width: 134px; }
.eq { height: 62px; border-radius: 0; color: #1f1f1f; }
.midi-fx { margin: 8px 0 18px; }
.gap-fx { height: 62px; flex: none; }
.afx { margin: 14px 0 18px; }
.sends { display: flex; justify-content: space-between; align-items: center; width: 138px; }
.sends .slot { width: 100px; }
.sends i { width: 32px; height: 32px; border-radius: 50%; background: #535353; border: 2px solid #494949; }
.out { margin: 16px 0 10px; }
.gap-out { height: 98px; flex: none; }
.group-slot { width: 134px; margin-left: 2px; border-radius: 0; color: #222; background: #555; }
.read { margin-top: 10px; color: #6fe388; border-color: #323232; }
.knob { margin: 16px 34px 14px; }
.pair { display: flex; gap: 6px; width: 138px; flex: none; }
.pair > * { width: 66px; height: 36px; }
.vals span { background: #2e2e2e; text-align: center; line-height: 36px; border-radius: 2px; }
.vals .peak { color: #64d37c; }
.fader { position: relative; margin: 32px 0 0; height: 292px; }
.fader text { font-size: 14px; fill: #bdbdbd; }
.fader input { position: absolute; left: 17px; top: 10px; width: 34px; height: 274px; appearance: none; writing-mode: vertical-lr; direction: rtl; }
.fader input::-webkit-slider-thumb { appearance: none; width: 34px; height: 70px; border-radius: 3px; box-shadow: 0 4px 6px rgb(0 0 0 / 40%); background:
  linear-gradient(transparent 34px, #333 34px 36px, transparent 36px),
  repeating-linear-gradient(transparent 0 3px, rgb(80 80 80 / 50%) 3px 4px) 0 11px / 100% 48px no-repeat,
  linear-gradient(#b5b5b5, #dadfe0 9px, #808080 10px, #a0a0a0 33px, #a9a9a9 36px, #ced2d4 57px, #e5e8e8 60px, #8a8a8a 61px, #757575); }
.bounce .slot, .ms .slot { width: 66px; color: #fff; border-color: #363636; font-size: 25px; }
.ms { margin-top: 4px; }
.strip-name { margin-top: 28px; text-align: center; line-height: 28px; }

/* tracks */
.tracks-area { flex: 1; min-width: 0; display: flex; flex-direction: column; border: 4px solid #80b9f5; border-radius: 12px; margin-left: -4px; background: #606060; overflow: hidden; position: relative; box-shadow: inset 0 0 0 2px #000; padding: 2px; }
.toolbar { display: flex; align-items: center; height: 58px; padding: 2px 16px 0; border-bottom: 2px solid #1c1c1c; background: #484848; flex: none; }
.seg, .pop { display: flex; height: 42px; flex: none; border: 1px solid #2a2a2a; border-radius: 8px; overflow: hidden; background: linear-gradient(#434343, #383838); box-shadow: 0 2px 1px rgb(0 0 0 / 35%); }
.seg { margin-right: 16px; }
.seg > button { width: 64px; border-left: 1px solid #2c2c2c; }
.seg > button:first-child { border-left: 0; }
.seg > .on { background: linear-gradient(#3a6ea8, #35659b); }
.faint { background: #464646; border-color: #3a3a3a; box-shadow: none; }
.up { fill: none; stroke: #8a8a8a; stroke-width: 2; }
.menus { font-size: 25px; font-weight: 500; }
.menus > button, .menus > button:first-child { width: auto; gap: 22px; padding: 0 14px 0 21px; }
.menus svg, .tools svg:last-child { color: #999; }
.tools { margin-left: auto; margin-right: 20px; }
.tools > button, .tools > button:first-child { width: 86px; gap: 10px; }
.cap { font-size: 25px; color: #c6c6c6; margin-right: 8px; }
.pop { align-items: center; padding: 0 12px 0 20px; font-size: 25px; font-weight: 500; margin-right: 20px; }
.pop select { flex: 1; min-width: 0; }
.pop svg { color: #999; }
.snap { width: 320px; }
.drag { width: 202px; margin-right: 16px; padding-right: 8px; }
.zooms { margin-right: 0; }
.z { display: flex; align-items: center; justify-content: space-between; width: 150px; padding: 0 14px 0 14px; }
.z + .z { border-left: 1px solid #2a2a2a; padding: 0 14px 0 6px; }
.z svg { fill: none; stroke: #aaa; stroke-width: 2; }
.zs { width: 90px; height: 32px; }
.zs input { display: block; width: 90px; height: 22px; margin-top: 2px; appearance: none; background: linear-gradient(#2c2c2c, #2c2c2c) 0 8px / 100% 6px no-repeat; }
.zs input::-webkit-slider-thumb { appearance: none; width: 20px; height: 22px; background: #acacac; clip-path: polygon(50% 0, 85% 35%, 100% 60%, 100% 100%, 0 100%, 0 60%, 15% 35%); }
.arrange { flex: 1; display: flex; min-height: 0; }
.headers { width: 734px; flex: none; border-right: 2px solid #000; background: #606060; }
.subbar { display: flex; align-items: flex-start; height: 72px; padding: 12px 16px 0; border-bottom: 2px solid #000; background: #525252; }
.subbar .seg button { font-size: 32px; }
.seg > .hide { background: #b56b1c; }
.config { margin-left: auto; }
.subbar .config { margin-right: 0; }
.track-list li { display: flex; height: 40px; }
.num { width: 41px; flex: none; padding-top: 8px; line-height: 30px; text-align: center; font-size: 25px; font-weight: 500; border-bottom: 2px solid #484848; }
.navy { background: #2d2d5e; }
.indigo { background: #3b3a82; }
.blue { background: #3a70aa; }
.green { background: #26a339; }
.row { flex: 1; min-width: 0; display: flex; align-items: center; border-left: 2px solid #4a4a4a; border-bottom: 2px solid #484848; padding: 2px 20px 0 61px; position: relative; }
.selected .row { background: #828282; border-bottom-color: #606060; }
.folder .row { border-bottom-color: transparent; }
.child .row { margin-left: 26px; padding-left: 35px; }
.child.first .row { margin-top: -2px; border-top: 2px solid #484848; border-top-left-radius: 22px; }
.fold { position: absolute; left: 24px; top: 12px; }
.tb, .btns { height: 36px; border: 2px solid #3a3a3a; border-radius: 8px; overflow: hidden; background: #515151; flex: none; }
.power { width: 42px; background: #366ba5; border-color: #223f60; }
.btns { display: flex; margin-left: 12px; font-size: 25px; }
.btns button { border-left: 2px solid #3a3a3a; width: 40px; }
.btns button:first-child { border-left: 0; width: 38px; }
.no-freeze { margin-left: 52px; }
.mute { background: #28797d; }
.armed { background: #d03632; }
.name { position: absolute; left: 347px; display: flex; align-items: center; font-size: 25px; font-weight: 500; white-space: nowrap; }
.child .name { left: 321px; }
.name svg { margin-left: 12px; color: #e2e2e2; }
.name.long svg { margin-left: 30px; }
.ch { margin-left: 12px; padding-left: 11px; border-left: 2px solid #8b8b8b; color: #8f8f8f; font-weight: 400; line-height: 26px; }
.led { width: 18px; height: 18px; border-radius: 50%; background: #3a3a3a; margin-left: auto; }
.live { background: #4fd35f; }

/* timeline */
.timeline { flex: 1; min-width: 0; background: #2d2d2d; overflow: hidden; }
.ruler { position: relative; height: 72px; border-bottom: 2px solid #000; background: linear-gradient(#333 34px, #222 34px 36px, #333 36px); overflow: hidden; }
.ruler svg { position: absolute; inset: 0; width: 100%; height: 70px; stroke: #606060; stroke-width: 2; }
.ruler span { position: absolute; top: 0; line-height: 30px; color: #cbcbcb; font-size: 25px; }
.cycle { width: 107px; height: 36px; background: #4b4b4b; border-right: 2px solid #000; border-bottom: 2px solid #000; }
.lane { position: relative; height: 40px; }
.lane.selected { background: #323232; }
.voc { background: #2a2e35; }
.lane strong { position: absolute; right: 44px; line-height: 40px; font-size: 22px; font-weight: 700; color: #a3cbf3; }
.region { position: absolute; top: 0; height: 40px; border: 2px solid #000; border-radius: 9px; background: #484848; display: flex; align-items: center; padding-left: 9px; font-size: 22px; font-weight: 500; white-space: nowrap; overflow: hidden; }
.region.early { padding-left: 38px; }
.region.green { background: #26a339; }
.region.blue { background: #3a70aa; padding-left: 35px; }
.lime { color: #7ef08d; }
.sky { color: #86baec; font-weight: 400; }
.dim { color: #a9a9a9; }
.region.white { color: #e8f2fc; }
.region > svg { margin-left: 16px; }
.region > .mono { margin-left: 18px; }
.green-dot { width: 18px; height: 18px; border-radius: 50%; background: #6cf47f; margin-right: 12px; }
.chip { display: flex; align-items: center; justify-content: center; width: 28px; height: 26px; margin-right: 2px; background: #2f2f2f; color: #f0f0f0; font-weight: 400; }
.chip:first-child:not(.last) { margin-left: -4px; width: 30px; border-radius: 8px 0 0 8px; }
.chip.last { width: 36px; margin-right: 8px; }
</style>
